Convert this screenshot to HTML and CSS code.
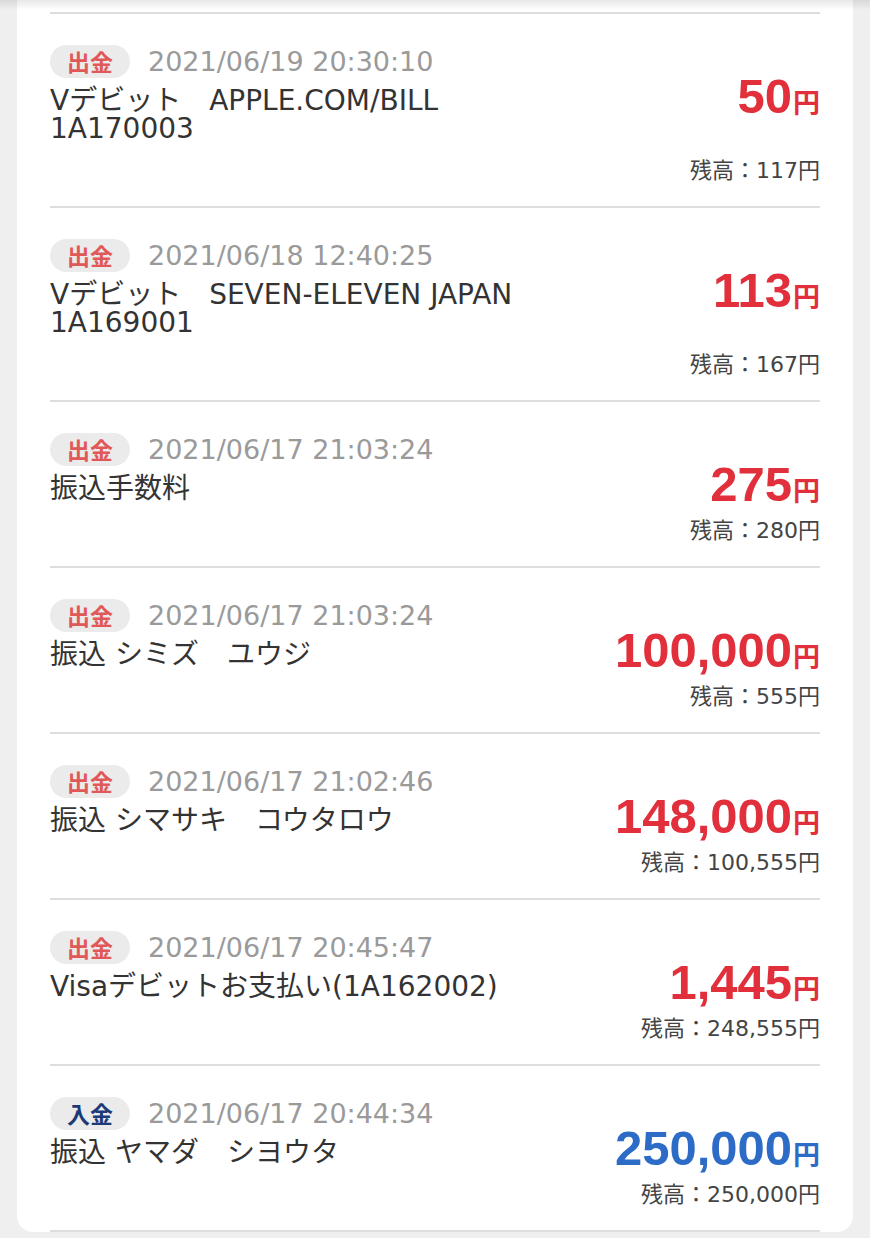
FILE: index.html
```html
<!DOCTYPE html>
<html lang="ja">
<head>
<meta charset="utf-8">
<title>入出金明細</title>
<link rel="stylesheet" href="styles.css">
</head>
<body>
<div class="top-shade"></div>
<div class="card">
  <div class="list">
    <div class="row">
      <div class="head"><span class="badge out">出金</span><span class="date">2021/06/19 20:30:10</span></div>
      <div class="main">
        <div class="desc">Vデビット　APPLE.COM/BILL<br>1A170003</div>
        <div class="amount out">50<span class="yen">円</span></div>
      </div>
      <div class="balance">残高：117円</div>
    </div>
    <div class="row">
      <div class="head"><span class="badge out">出金</span><span class="date">2021/06/18 12:40:25</span></div>
      <div class="main">
        <div class="desc">Vデビット　SEVEN-ELEVEN JAPAN<br>1A169001</div>
        <div class="amount out">113<span class="yen">円</span></div>
      </div>
      <div class="balance">残高：167円</div>
    </div>
    <div class="row">
      <div class="head"><span class="badge out">出金</span><span class="date">2021/06/17 21:03:24</span></div>
      <div class="main">
        <div class="desc">振込手数料</div>
        <div class="amount out">275<span class="yen">円</span></div>
      </div>
      <div class="balance">残高：280円</div>
    </div>
    <div class="row">
      <div class="head"><span class="badge out">出金</span><span class="date">2021/06/17 21:03:24</span></div>
      <div class="main">
        <div class="desc">振込 シミズ　ユウジ</div>
        <div class="amount out">100,000<span class="yen">円</span></div>
      </div>
      <div class="balance">残高：555円</div>
    </div>
    <div class="row">
      <div class="head"><span class="badge out">出金</span><span class="date">2021/06/17 21:02:46</span></div>
      <div class="main">
        <div class="desc">振込 シマサキ　コウタロウ</div>
        <div class="amount out">148,000<span class="yen">円</span></div>
      </div>
      <div class="balance">残高：100,555円</div>
    </div>
    <div class="row">
      <div class="head"><span class="badge out">出金</span><span class="date">2021/06/17 20:45:47</span></div>
      <div class="main">
        <div class="desc">Visaデビットお支払い(1A162002)</div>
        <div class="amount out">1,445<span class="yen">円</span></div>
      </div>
      <div class="balance">残高：248,555円</div>
    </div>
    <div class="row">
      <div class="head"><span class="badge in">入金</span><span class="date">2021/06/17 20:44:34</span></div>
      <div class="main">
        <div class="desc">振込 ヤマダ　シヨウタ</div>
        <div class="amount in">250,000<span class="yen">円</span></div>
      </div>
      <div class="balance">残高：250,000円</div>
    </div>
  </div>
</div>
</body>
</html>
```
FILE: styles.css
```css
html, body {
  margin: 0;
  padding: 0;
}
body {
  background: #efefef;
  font-family: "DejaVu Sans", "Noto Sans CJK JP", sans-serif;
  color: #333;
  height: 1238px;
  overflow: hidden;
}
.top-shade {
  position: fixed;
  top: 0;
  left: 0;
  right: 0;
  height: 10px;
  background: linear-gradient(to bottom, rgba(0,0,0,0.09), rgba(0,0,0,0));
  z-index: 2;
}
.card {
  background: #fff;
  margin: 0 17px;
  border-radius: 0 0 16px 16px;
}
.list {
  margin: 0 33px;
  padding-top: 12px;
}
.row {
  border-top: 2px solid #dedede;
  padding: 31px 0 22px;
}
.row:last-child {
  border-bottom: 2px solid #dedede;
}
.head {
  display: flex;
  align-items: center;
  height: 33px;
}
.badge {
  display: inline-flex;
  align-items: center;
  justify-content: center;
  height: 33px;
  padding: 0 17px;
  border-radius: 17px;
  background: #ebebeb;
  font-family: "Noto Sans CJK JP", sans-serif;
  font-weight: 700;
  font-size: 23px;
  line-height: 1;
}
.badge.out { color: #e05858; }
.badge.in { color: #1c3a78; }
.date {
  margin-left: 18px;
  font-size: 27px;
  line-height: 33px;
  color: #9a9a9a;
}
.main {
  display: flex;
  justify-content: space-between;
  align-items: flex-start;
  margin-top: 9px;
}
.desc {
  font-size: 28px;
  line-height: 28px;
  color: #333;
}
.amount {
  font-family: "Liberation Sans", "Noto Sans CJK JP", sans-serif;
  font-weight: 700;
  font-size: 49px;
  line-height: 27px;
  margin-top: -4px;
  white-space: nowrap;
}
.amount.out { color: #e1303c; }
.amount.in { color: #2d6cc6; }
.yen {
  font-family: "Noto Sans CJK JP", sans-serif;
  font-size: 27px;
  font-weight: 700;
  margin-left: 1px;
}
.balance {
  margin-top: 15px;
  text-align: right;
  font-size: 22px;
  line-height: 26px;
  color: #444;
}
```
